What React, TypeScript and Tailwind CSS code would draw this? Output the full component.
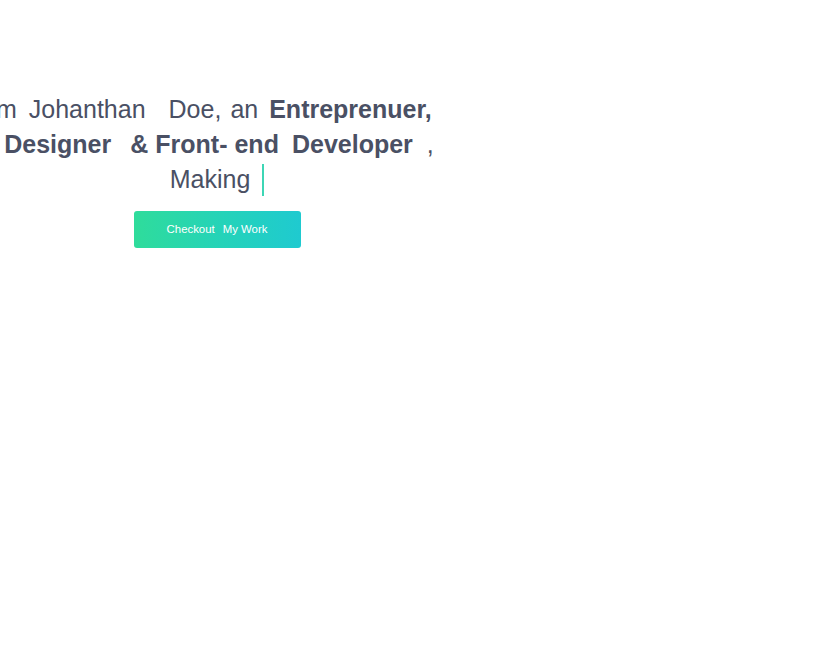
export default function App() {
  return (
    <div className="min-h-[658px] w-[830px] overflow-hidden bg-white font-['Liberation_Sans',Arial,sans-serif] text-[#4a5064]">
      <div className="ml-[-33px] w-[500px] pt-[92px]">
        <div className="text-[25px] leading-[35px]">
          <div className="flex justify-center whitespace-nowrap pr-[18px]">
            <span>I'm</span>
            <span className="ml-[12px]">Johanthan</span>
            <span className="ml-[23px]">Doe,</span>
            <span className="ml-[9px]">an</span>
            <span className="ml-[11px] font-bold">Entreprenuer,</span>
          </div>
          <div className="flex justify-center whitespace-nowrap pl-[4px] font-bold">
            <span>Designer</span>
            <span className="ml-[19px]">&amp;</span>
            <span className="ml-[7px]">Front-</span>
            <span className="ml-[7px]">end</span>
            <span className="ml-[13px]">Developer</span>
            <span className="ml-[14px] font-normal">,</span>
          </div>
          <div className="flex items-center justify-center whitespace-nowrap">
            <span>Making</span>
            <span className="ml-[12px] inline-block h-[32px] w-[2px] bg-[#3dd6b5]" />
          </div>
        </div>
        <div className="mt-[14px] flex justify-center">
          <button className="flex h-[37px] w-[167px] items-center justify-center rounded-[3px] bg-gradient-to-r from-[#2fdc9b] to-[#1fcad0] text-[11.4px] text-white">
            <span>Checkout</span>
            <span className="ml-[8px]">My Work</span>
          </button>
        </div>
      </div>
    </div>
  );
}
